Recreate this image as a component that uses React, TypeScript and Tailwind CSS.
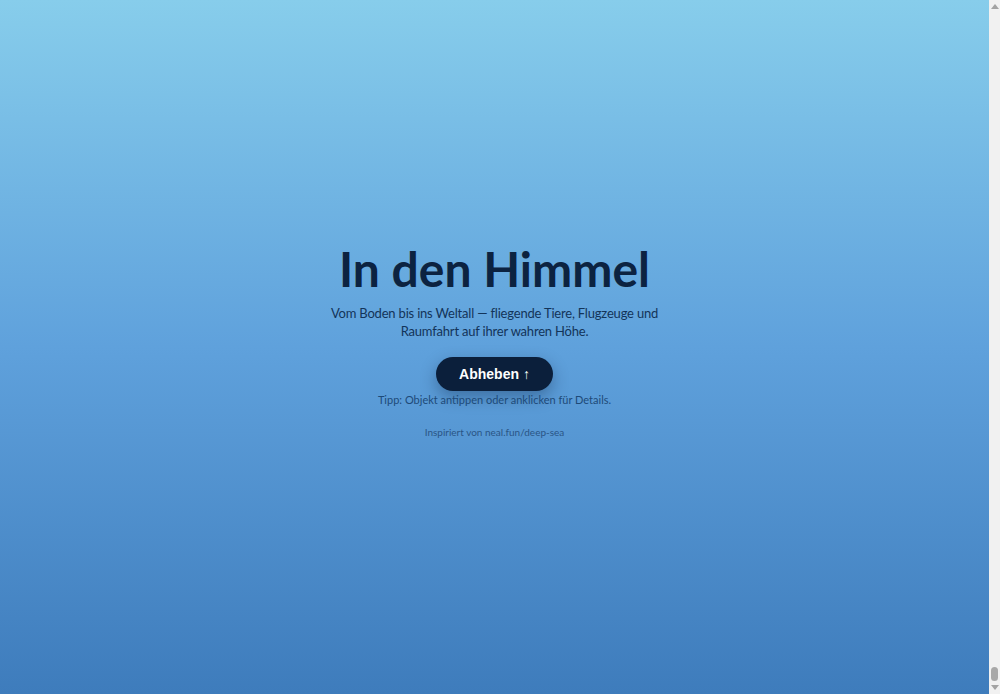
// Sky page hero (ground level). The long altitude scroll lives above it; the
// screenshot shows the bottom of the page, so the scrollbar thumb sits low.
function Scrollbar() {
  return (
    <div className="w-[11px] h-screen shrink-0 bg-[#f1f1f1] flex flex-col items-center">
      <div className="mt-[4px] w-0 h-0 border-l-[4px] border-r-[4px] border-b-[5px] border-l-transparent border-r-transparent border-b-[#a3a3a3]" />
      <div className="flex-1" />
      <div className="w-[7px] h-[14px] rounded-full bg-[#a8a8a8]" />
      <div className="mt-[4px] mb-[4px] w-0 h-0 border-l-[4px] border-r-[4px] border-t-[5px] border-l-transparent border-r-transparent border-t-[#a3a3a3]" />
    </div>
  )
}

export default function App() {
  return (
    <div className="flex h-screen overflow-hidden font-['Lato','Noto_Sans',sans-serif]">
      <section className="flex-1 bg-gradient-to-b from-[#87cdeb] via-[#5fa1dc] to-[#3e7cbc] flex items-center justify-center px-4 pb-[14px]">
        <div className="flex flex-col items-center text-center">
          <h1 className="text-[48px] leading-[56px] font-bold text-[#0c2341]">
            In den Himmel
          </h1>
          <p className="mt-[7px] max-w-[336px] text-[13px] leading-[18px] tracking-[-0.015em] text-[#133459]">
            Vom Boden bis ins Weltall — fliegende Tiere, Flugzeuge und Raumfahrt auf ihrer wahren Höhe.
          </p>
          <button
            type="button"
            className="mt-[17px] h-[34px] w-[117px] rounded-full bg-[#0b1f3b] text-[14px] font-bold text-white shadow-[0_6px_16px_rgba(10,30,60,0.35)] font-['Liberation_Sans',Arial,sans-serif]"
          >
            Abheben ↑
          </button>
          <p className="mt-[1px] text-[11px] leading-[16px] text-[#1e4a78]">
            Tipp: Objekt antippen oder anklicken für Details.
          </p>
          <p className="mt-[17px] text-[10px] leading-[14px] text-[#2a5585]">
            Inspiriert von neal.fun/deep-sea
          </p>
        </div>
      </section>
      <Scrollbar />
    </div>
  )
}
